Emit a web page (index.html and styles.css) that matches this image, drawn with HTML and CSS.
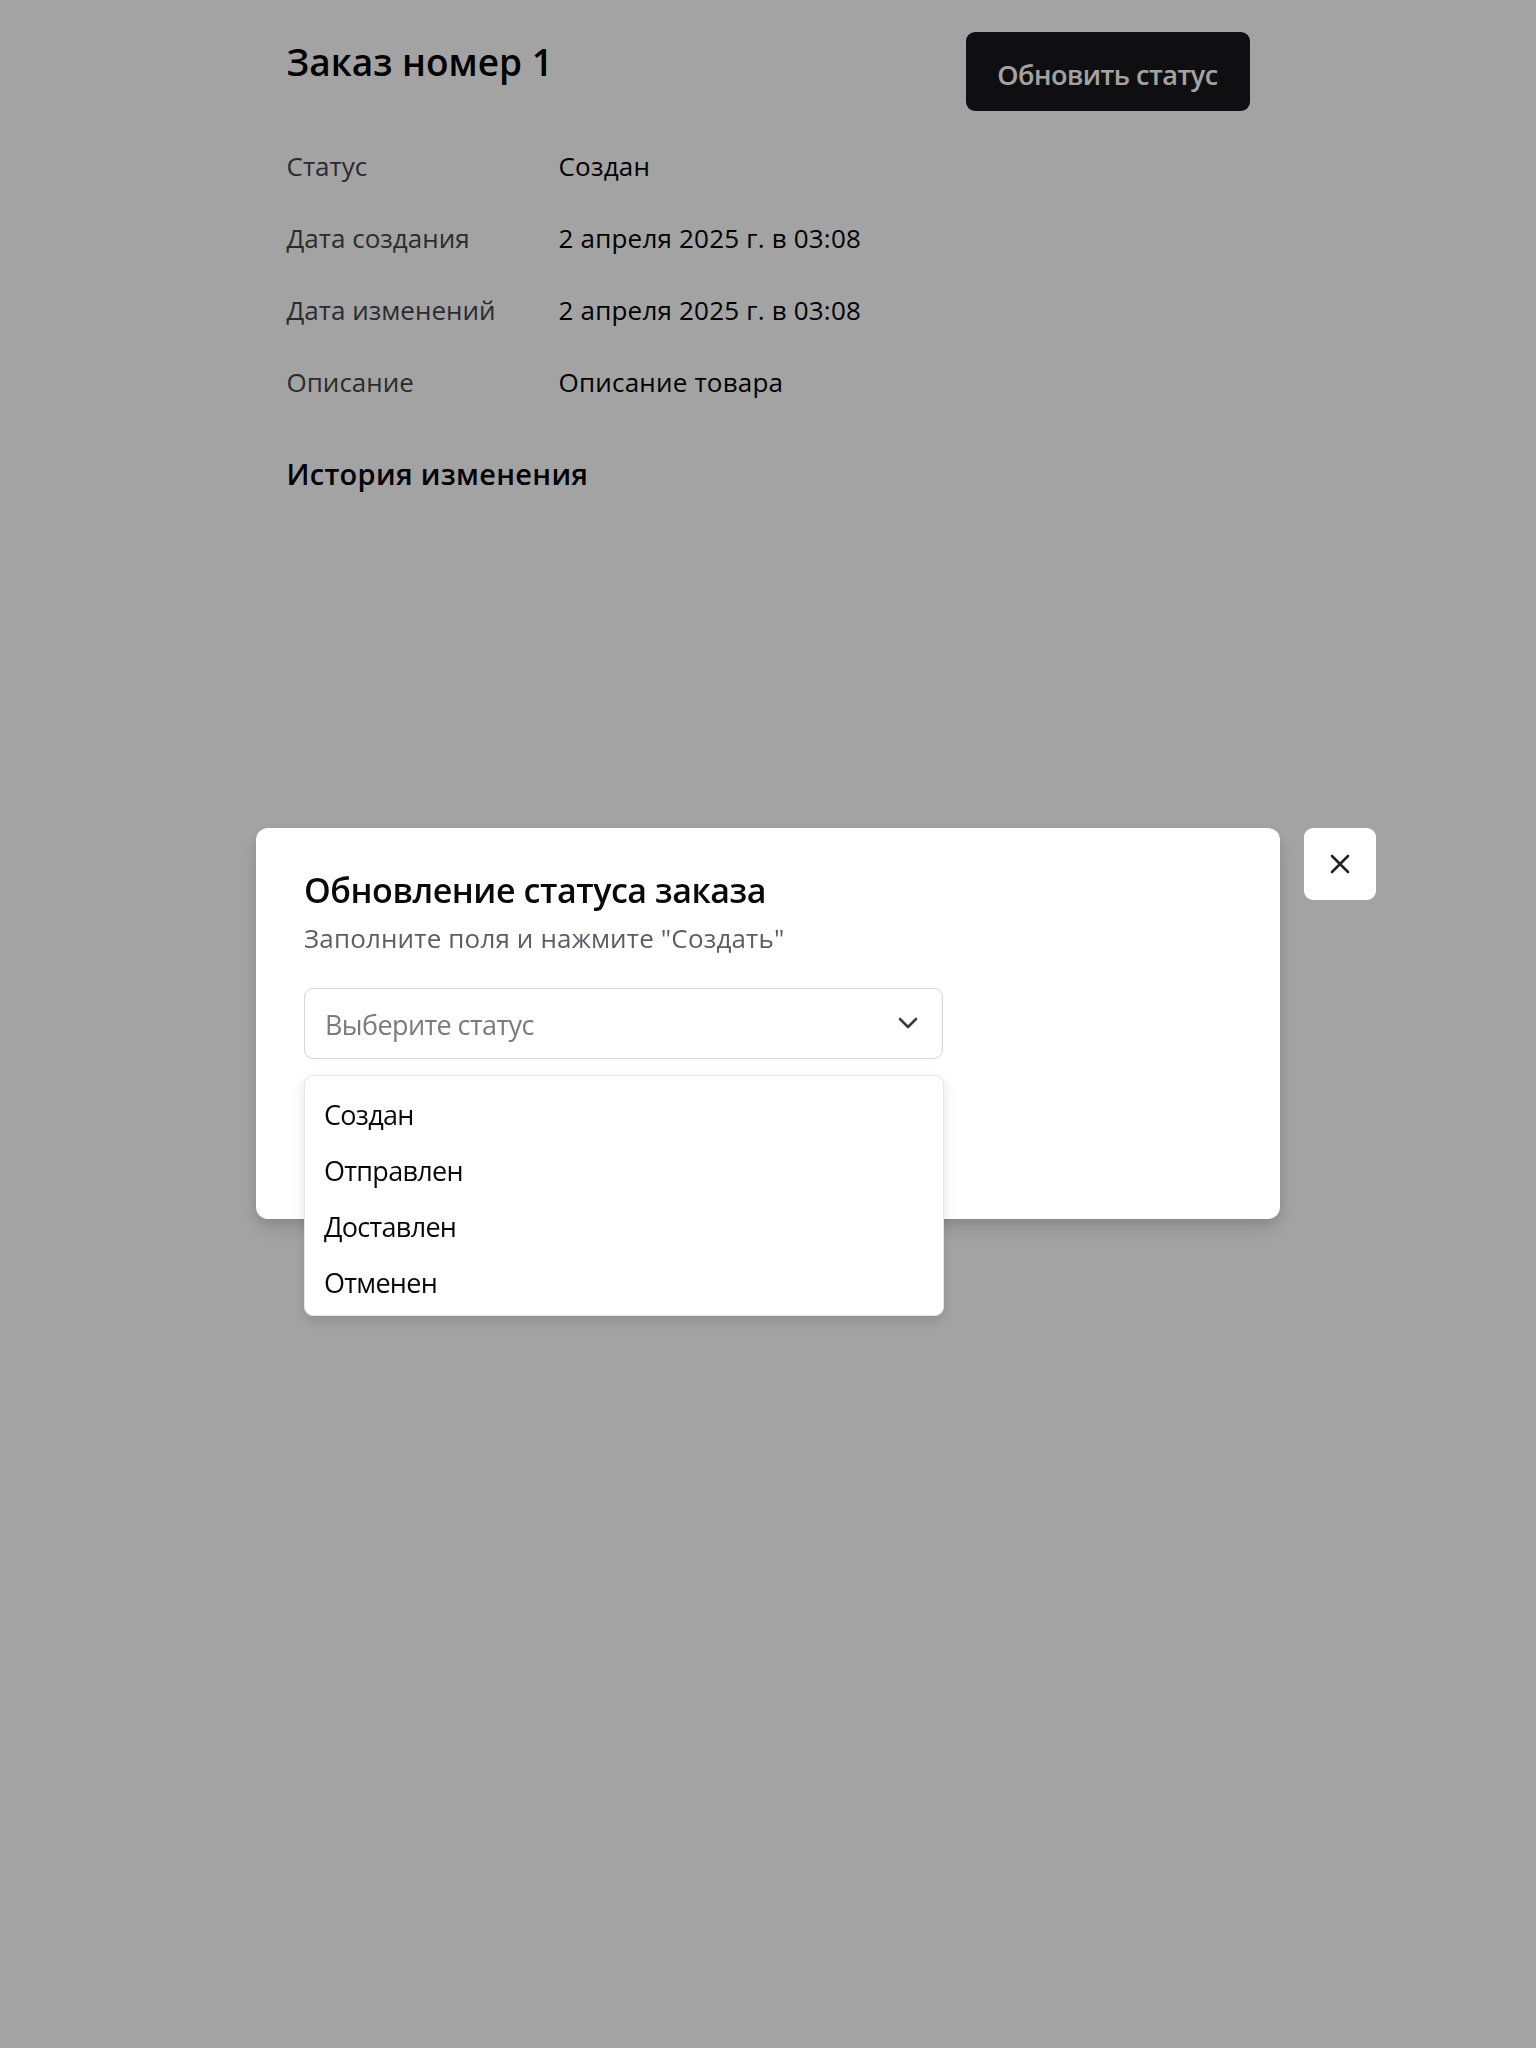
FILE: index.html
```html
<!DOCTYPE html>
<html lang="ru">
<head>
<meta charset="utf-8">
<title>Заказ номер 1</title>
<link rel="stylesheet" href="styles.css">
</head>
<body>
<main class="page">
  <header class="page-header">
    <h1 class="page-title">Заказ номер 1</h1>
    <button class="btn-primary" type="button">Обновить статус</button>
  </header>
  <dl class="details">
    <div class="row"><dt>Статус</dt><dd>Создан</dd></div>
    <div class="row"><dt>Дата создания</dt><dd>2 апреля 2025 г. в 03:08</dd></div>
    <div class="row"><dt>Дата изменений</dt><dd>2 апреля 2025 г. в 03:08</dd></div>
    <div class="row"><dt>Описание</dt><dd>Описание товара</dd></div>
  </dl>
  <h2 class="section-title">История изменения</h2>
</main>

<div class="overlay">
  <div class="modal" role="dialog">
    <h3 class="modal-title">Обновление статуса заказа</h3>
    <p class="modal-desc">Заполните поля и нажмите "Создать"</p>
    <div class="select-wrap">
      <div class="select">
        <span class="placeholder">Выберите статус</span>
        <svg class="chevron" width="20" height="12" viewBox="0 0 20 12" fill="none"><path d="M2 2l8 8 8-8" stroke="#3a3a40" stroke-width="2.6" stroke-linecap="round" stroke-linejoin="round"/></svg>
      </div>
      <ul class="menu">
        <li>Создан</li>
        <li>Отправлен</li>
        <li>Доставлен</li>
        <li>Отменен</li>
      </ul>
    </div>
    <button class="close-btn" type="button" aria-label="Закрыть">
      <svg width="20" height="20" viewBox="0 0 20 20" fill="none"><path d="M2 2l16 16M18 2L2 18" stroke="#222" stroke-width="2.6" stroke-linecap="round"/></svg>
    </button>
  </div>
</div>
</body>
</html>
```
FILE: styles.css
```css
* { box-sizing: border-box; }
html, body { margin: 0; padding: 0; }
body {
  background: #ffffff;
  font-family: "Open Sans", "Noto Sans", "DejaVu Sans", sans-serif;
  color: #000;
  min-height: 2048px;
}
.page {
  width: 963px;
  margin: 0 auto;
  padding-top: 32px;
}
.page-header {
  display: flex;
  justify-content: space-between;
  align-items: flex-start;
}
.page-title {
  margin: 6px 0 0;
  font-size: 37px;
  line-height: 48px;
  font-weight: 600;
  letter-spacing: 0;
}
.btn-primary {
  width: 284px;
  height: 79px;
  border: none;
  border-radius: 9px;
  background: #18181b;
  color: #fff;
  font-family: inherit;
  font-size: 27px;
  font-weight: 600;
  letter-spacing: -0.5px;
  padding: 5px 0 0;
}
.details {
  margin: 19px 0 0;
}
.row {
  display: grid;
  grid-template-columns: 272px 1fr;
  height: 72px;
  align-items: center;
  font-size: 26px;
}
.row dt { color: #46464c; letter-spacing: 0; }
.row dd { margin: 0; color: #000; letter-spacing: 0.2px; }
.section-title {
  margin: 36px 0 0;
  font-size: 29px;
  line-height: 40px;
  font-weight: 600;
  letter-spacing: 0.3px;
}
.overlay {
  position: fixed;
  inset: 0;
  background: rgba(0, 0, 0, 0.36);
  display: flex;
  align-items: center;
  justify-content: center;
}
.modal {
  position: relative;
  width: 1024px;
  height: 391px;
  margin-top: -2px;
  background: #fff;
  border-radius: 12px;
  padding: 40px 48px 48px;
  box-shadow: 0 10px 20px rgba(0,0,0,0.12), 0 4px 8px rgba(0,0,0,0.08);
}
.modal-title {
  margin: 0;
  font-size: 34px;
  line-height: 44px;
  font-weight: 600;
  letter-spacing: -0.45px;
  color: #09090b;
}
.modal-desc {
  margin: 10px 0 0;
  font-size: 26px;
  line-height: 32px;
  color: #5d5d66;
  letter-spacing: 0.15px;
}
.select-wrap {
  position: relative;
  width: 639px;
  margin-top: 34px;
}
.select {
  height: 71px;
  border: 1.5px solid #d6d6d9;
  border-radius: 9px;
  display: flex;
  align-items: center;
  justify-content: space-between;
  padding: 3px 24px 0 20px;
}
.placeholder {
  font-size: 27px;
  color: #7a7a80;
  letter-spacing: -0.6px;
}
.chevron { display: block; margin-top: -3px; }
.menu {
  position: absolute;
  top: 87px;
  left: 0;
  right: -1px;
  margin: 0;
  padding: 11px 0 4px;
  list-style: none;
  background: #fff;
  border: 1.5px solid #e6e6e8;
  border-radius: 9px;
  box-shadow: 0 6px 14px rgba(0,0,0,0.12);
}
.menu li {
  height: 56px;
  line-height: 56px;
  padding-left: 19px;
  font-size: 27px;
  letter-spacing: -0.7px;
  color: #09090b;
}
.close-btn {
  position: absolute;
  top: 0;
  left: calc(100% + 24px);
  width: 72px;
  height: 72px;
  border: none;
  border-radius: 9px;
  background: #fff;
  display: flex;
  align-items: center;
  justify-content: center;
  padding: 0;
}
```
